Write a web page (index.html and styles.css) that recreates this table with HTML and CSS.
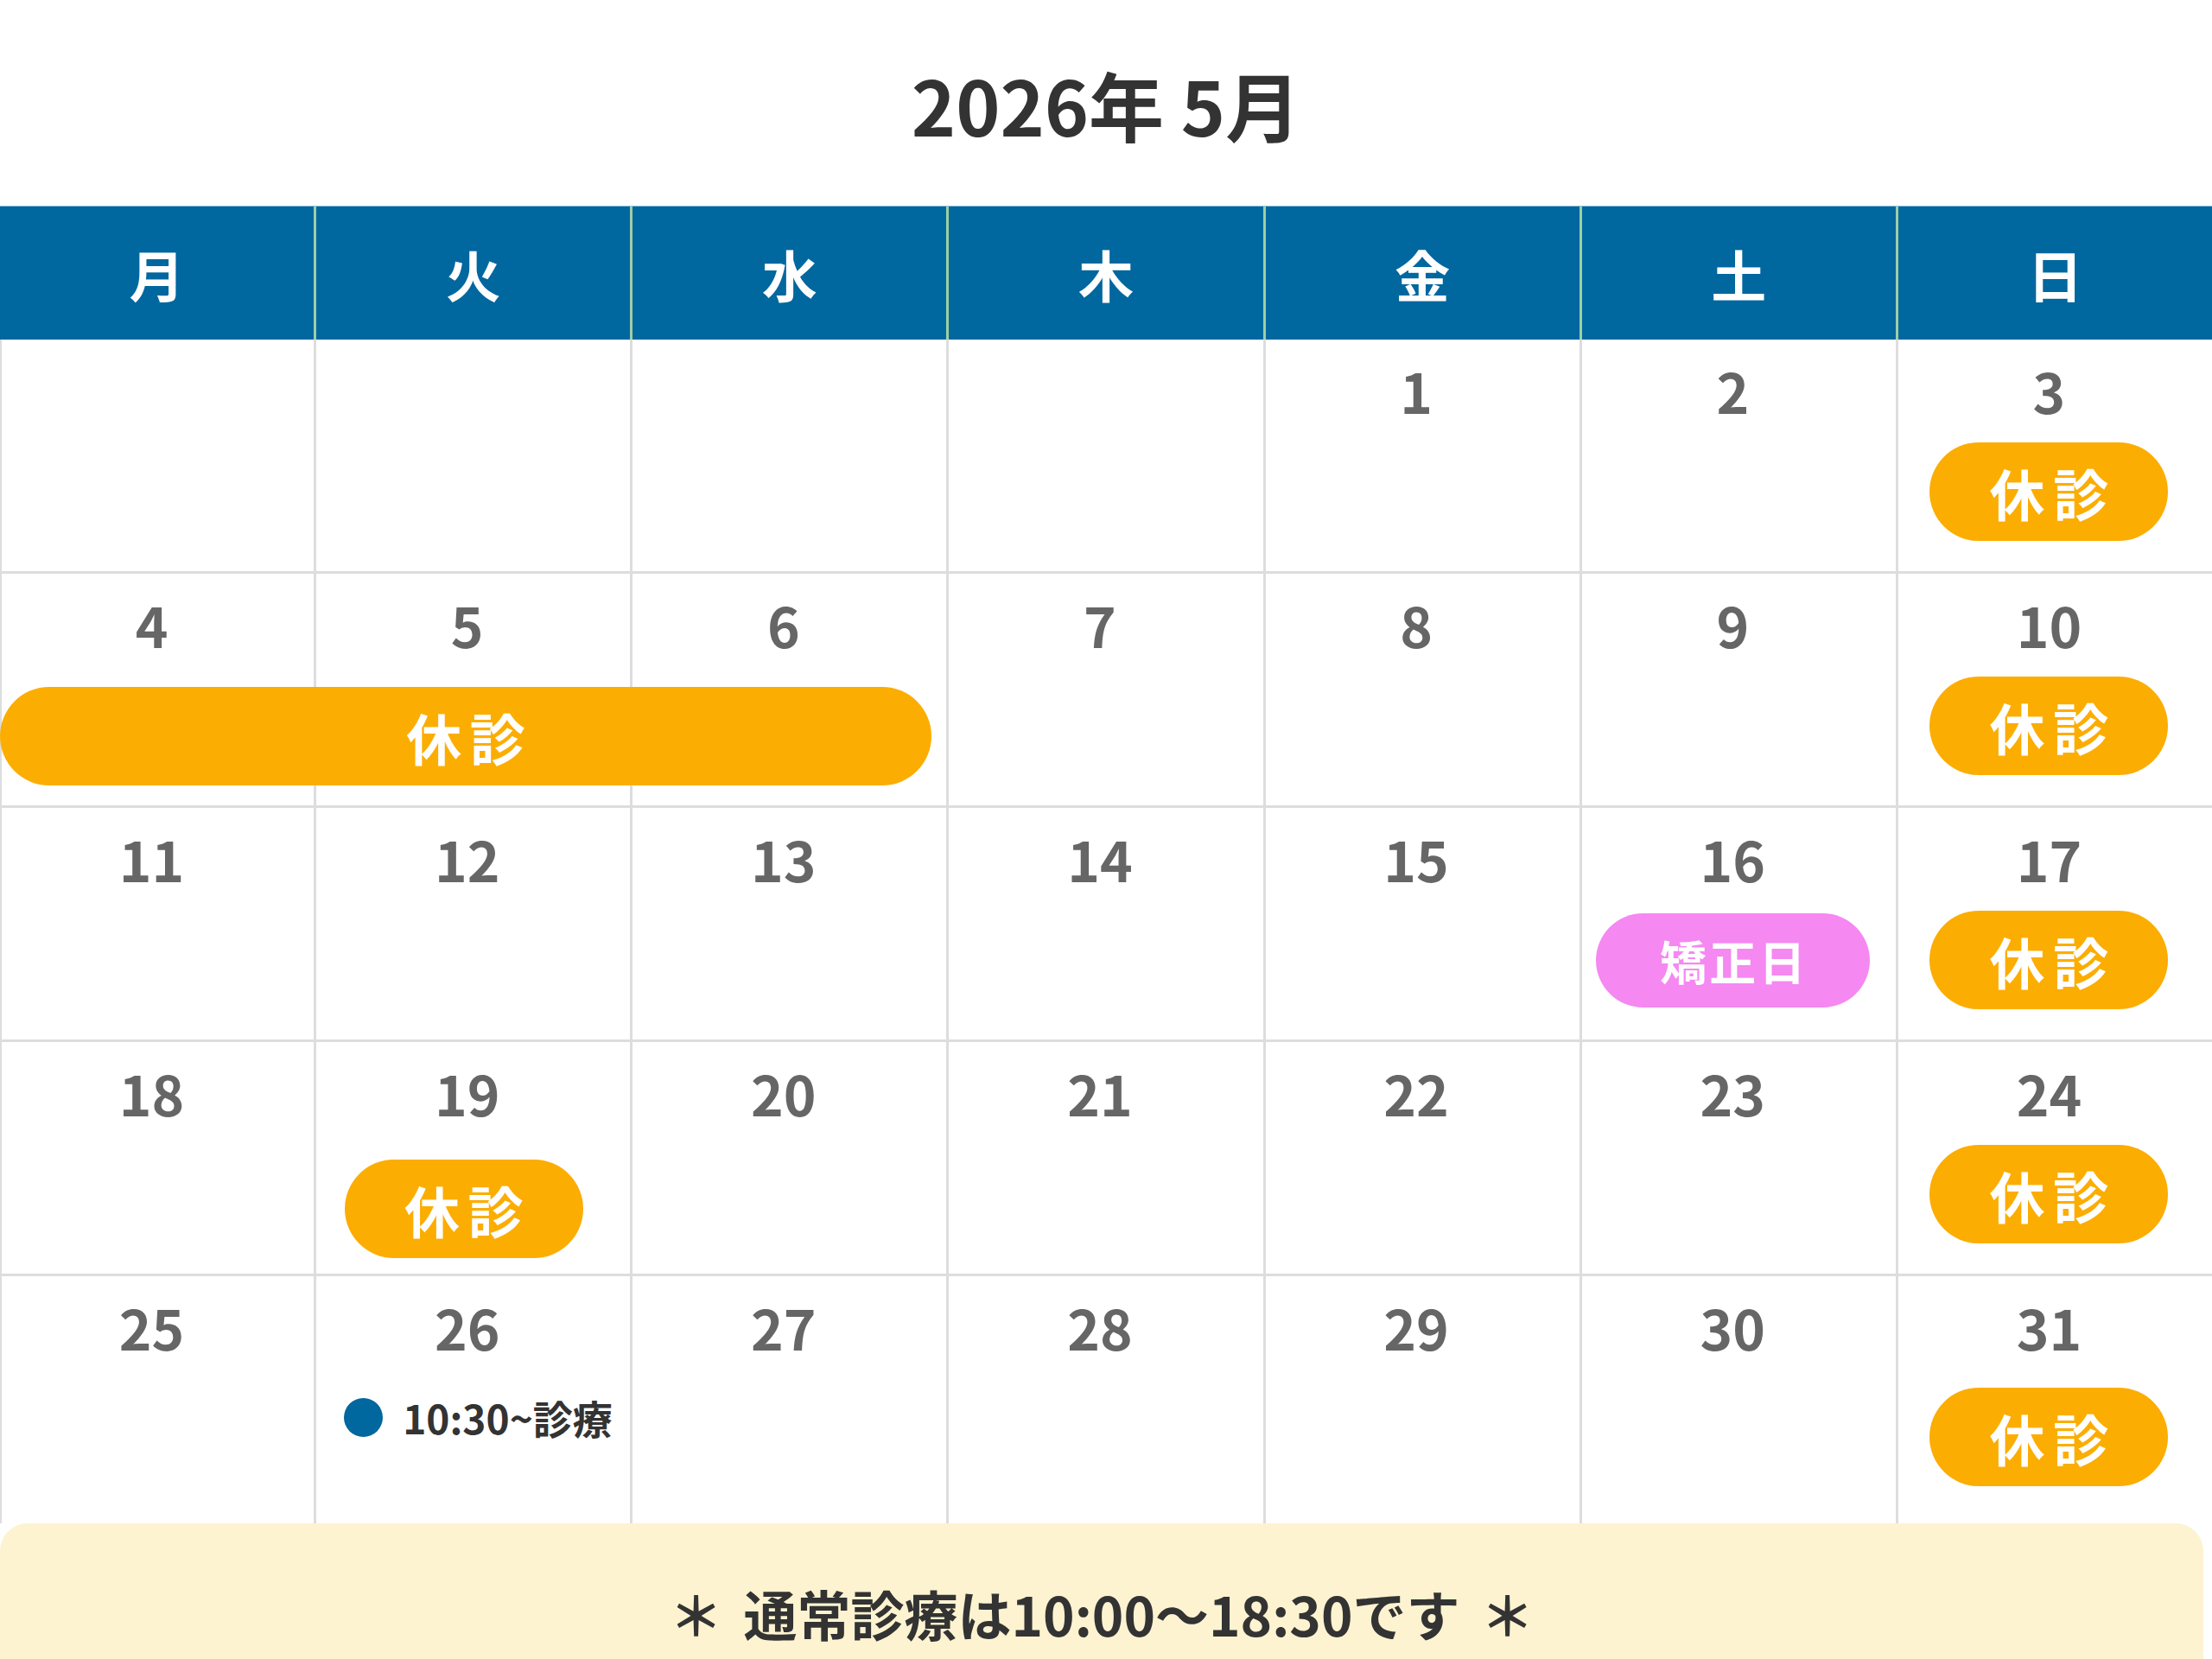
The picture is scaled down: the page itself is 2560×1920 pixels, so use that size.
FILE: index.html
```html
<!DOCTYPE html>
<html lang="ja">
<head>
<meta charset="utf-8">
<title>2026年 5月</title>
<link rel="stylesheet" href="styles.css">
</head>
<body>
<div class="page">
  <h1 class="title">2026年 5月</h1>
  <div class="cal">
    <div class="week-head">
      <div class="wd">月</div><div class="wd">火</div><div class="wd">水</div><div class="wd">木</div><div class="wd">金</div><div class="wd">土</div><div class="wd">日</div>
    </div>
    <div class="grid">
      <div class="cell"></div>
      <div class="cell"></div>
      <div class="cell"></div>
      <div class="cell"></div>
      <div class="cell"><span class="num">1</span></div>
      <div class="cell"><span class="num">2</span></div>
      <div class="cell"><span class="num">3</span><span class="badge">休診</span></div>

      <div class="cell"><span class="num">4</span></div>
      <div class="cell"><span class="num">5</span></div>
      <div class="cell"><span class="num">6</span></div>
      <div class="cell"><span class="num">7</span></div>
      <div class="cell"><span class="num">8</span></div>
      <div class="cell"><span class="num">9</span></div>
      <div class="cell"><span class="num">10</span><span class="badge">休診</span></div>

      <div class="cell"><span class="num">11</span></div>
      <div class="cell"><span class="num">12</span></div>
      <div class="cell"><span class="num">13</span></div>
      <div class="cell"><span class="num">14</span></div>
      <div class="cell"><span class="num">15</span></div>
      <div class="cell"><span class="num">16</span><span class="badge badge-pink">矯正日</span></div>
      <div class="cell"><span class="num">17</span><span class="badge">休診</span></div>

      <div class="cell"><span class="num">18</span></div>
      <div class="cell"><span class="num">19</span><span class="badge badge-event">休診</span></div>
      <div class="cell"><span class="num">20</span></div>
      <div class="cell"><span class="num">21</span></div>
      <div class="cell"><span class="num">22</span></div>
      <div class="cell"><span class="num">23</span></div>
      <div class="cell"><span class="num">24</span><span class="badge">休診</span></div>

      <div class="cell"><span class="num">25</span></div>
      <div class="cell"><span class="num">26</span><span class="event"><span class="dot"></span><span class="event-text">10:30~診療</span></span></div>
      <div class="cell"><span class="num">27</span></div>
      <div class="cell"><span class="num">28</span></div>
      <div class="cell"><span class="num">29</span></div>
      <div class="cell"><span class="num">30</span></div>
      <div class="cell"><span class="num">31</span><span class="badge badge-last">休診</span></div>
    </div>
    <div class="span-bar">休診</div>
  </div>
  <div class="note">＊ 通常診療は10:00〜18:30です ＊</div>
</div>
</body>
</html>
```

FILE: styles.css
```css
html, body {
  margin: 0;
  padding: 0;
  background: #ffffff;
}

body {
  font-family: "Noto Sans CJK JP", "Noto Sans", sans-serif;
  font-weight: 700;
  color: #333333;
}

.page {
  width: 2560px;
}

.title {
  margin: 0;
  padding: 77px 0 74px;
  font-size: 87px;
  line-height: 87px;
  font-weight: 700;
  text-align: center;
  color: #333333;
}

.cal {
  position: relative;
}

.week-head {
  display: grid;
  grid-template-columns: repeat(7, 1fr);
  column-gap: 3px;
  background: #9dcfa6;
  border-top: 1px solid #8ec3dc;
  height: 154px;
}

.wd {
  background: #00679f;
  color: #ffffff;
  font-size: 64px;
  display: flex;
  align-items: center;
  justify-content: center;
}

.grid {
  display: grid;
  grid-template-columns: repeat(7, 1fr);
  grid-template-rows: repeat(4, 268px) 286px;
  gap: 3px;
  background: #dddddd;
}

.cell {
  background: #ffffff;
  display: flex;
  flex-direction: column;
  align-items: center;
  padding: 26px 14px 0 0;
}

.cell:nth-child(7n+1) {
  border-left: 2px solid #dddddd;
}

.num {
  font-size: 64px;
  line-height: 64px;
  color: #666666;
}

.badge {
  margin-top: 29px;
  width: 276px;
  height: 114px;
  border-radius: 57px;
  background: #fcad02;
  color: #ffffff;
  font-size: 64px;
  line-height: 114px;
  text-align: center;
  letter-spacing: 0.15em;
  text-indent: 0.15em;
}

.badge-event {
  margin-top: 46px;
  margin-right: 8px;
}

.badge-last {
  margin-top: 39px;
}

.badge-pink {
  margin-top: 32px;
  width: 317px;
  height: 109px;
  line-height: 109px;
  border-radius: 55px;
  background: #f588f1;
  font-size: 54px;
  letter-spacing: 0.06em;
  text-indent: 0.06em;
}

.event {
  align-self: flex-start;
  display: flex;
  align-items: center;
  gap: 23px;
  margin: 51px 0 0 32px;
}

.dot {
  width: 45px;
  height: 45px;
  border-radius: 50%;
  background: #00679f;
  flex: none;
}

.event-text {
  font-size: 46px;
  line-height: 45px;
  color: #333333;
}

.span-bar {
  position: absolute;
  left: 0;
  top: 557px;
  width: 1078px;
  height: 114px;
  border-radius: 57px;
  background: #fcad02;
  color: #ffffff;
  font-size: 64px;
  line-height: 114px;
  text-align: center;
  letter-spacing: 0.15em;
  text-indent: 0.15em;
}

.note {
  margin-right: 10px;
  background: #fdf3d0;
  border-radius: 32px 32px 0 0;
  padding: 73px 0 84px;
  font-size: 62px;
  line-height: 62px;
  word-spacing: 10px;
  text-align: center;
  color: #333333;
}
```
